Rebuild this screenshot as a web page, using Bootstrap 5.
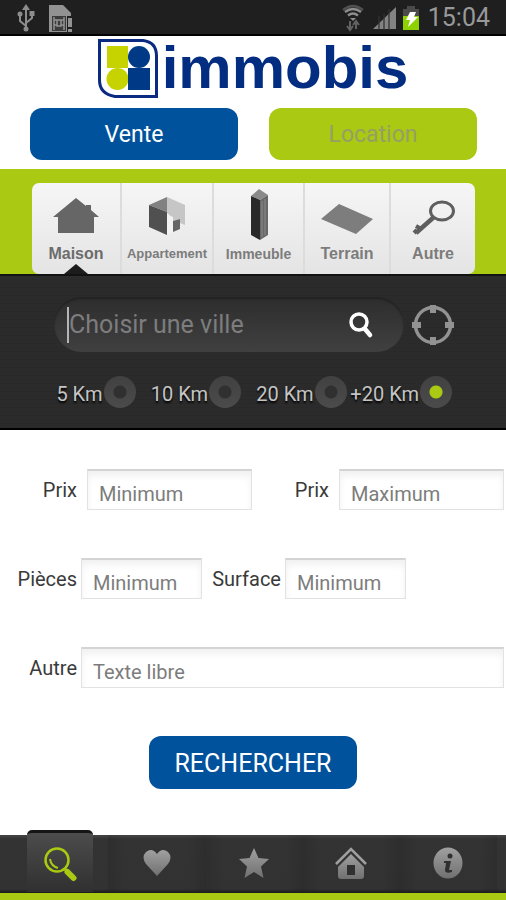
<!DOCTYPE html>
<html lang="fr">
<head>
<meta charset="utf-8">
<meta name="viewport" content="width=device-width, initial-scale=1">
<title>immobis</title>
<link href="https://cdn.jsdelivr.net/npm/bootstrap@5.3.0/dist/css/bootstrap.min.css" rel="stylesheet">
<style>
:root{--lime:#a9c913;--blue:#00529c;--ink:#2b2b2b}
body{font-family:Roboto,sans-serif;background:#fff;font-size:20px;line-height:24px}
svg{display:block;flex:none}
.statusbar{height:36px;background:#1f1f1f;border-bottom:2px solid #000;color:#999;font-size:25px;padding-top:2px}
.brand-name{font:700 60px/64px "Liberation Sans",Arial,sans-serif;color:#022d80}
.brand-row{height:64px}
.deal{padding:0 29px 9px 30px;margin-top:8px;gap:31px}
.btn-deal{height:52px;border-radius:12px;border:0;font-size:23px;line-height:24px;padding:8px 0 6px;color:#fff;background:var(--blue)}
.btn-deal:hover{color:#fff;background:#0a5eac}
.btn-deal.alt{background:var(--lime);color:#979f63}
.kinds{background:var(--lime);padding:14px 31px 0 32px}
.kind-grid{display:grid;grid-template-columns:90fr 92fr 91fr 86fr 84fr;background:linear-gradient(#f6f6f6,#e4e4e4);border-radius:7px;overflow:hidden}
.kind{display:flex;flex-direction:column;align-items:center;gap:1px;height:91px;padding:6px 0 0;border:0;background:none;border-right:2px solid #dcdcdc;color:#7c7c7c;font:700 16px/20px "Liberation Sans",Arial,sans-serif}
.kind:last-child{border-right:0}
.kind.t14{font-size:14px}.kind.t13{font-size:13px}
.kind.active{position:relative;color:#6c6c6c}
.kind.active::after{content:"";position:absolute;left:50%;bottom:0;margin-left:-12px;border:12px solid transparent;border-top:0;border-bottom:10px solid #1c1c1c}
.finder{background-color:var(--ink);background-image:repeating-linear-gradient(0deg,rgba(0,0,0,.04) 0 1px,transparent 1px 4px);border-top:2px solid #101214;border-bottom:2px solid #000;height:156px;padding:21px 52px 0 54px}
.pill{height:55px;min-width:0;border-radius:28px;background:linear-gradient(#2d2d2d,#404040);box-shadow:inset 0 2px 2px #222;padding:0 30px 0 13px}
.pill:focus-within{outline:1px solid #555}
.caret{width:2px;height:36px;background:#b5b5b5;flex:none}
.pill input{background:none;border:0;outline:0;color:#ddd;font-size:25px;line-height:32px;padding:0;width:0}
.pill input::placeholder{color:#7d7d7d;opacity:1}
.icon-btn{border:0;background:none;padding:0}
.radii{display:grid;grid-template-columns:repeat(4,1fr);margin:24px 2px 0 -24px}
.radii label{color:#c4c4c4;white-space:nowrap;text-shadow:0 2px 2px #000;gap:1px}
.radii span{padding-top:4px}
.radii input{appearance:none;width:32px;height:32px;border-radius:50%;margin:0;flex:none;background:radial-gradient(circle,#303030 0 6px,transparent 7px),linear-gradient(#414141,#4b4b4b)}
.radii input:checked{background:radial-gradient(circle,var(--lime) 0 6px,transparent 7px),linear-gradient(#414141,#4b4b4b)}
.criteria{padding:39px 2px 0 0;gap:48px}
.criteria label{width:77px;flex:none;text-align:right;color:#3a3a3a}
.criteria label.mid{width:79px}
.criteria input{height:41px;min-width:0;border:1px solid #e2e2e2;border-top:2px solid #d4d4d4;border-radius:0;box-shadow:inset 0 5px 7px #f1f1f1;padding:8px 11px 0 11px;color:#333;background:#fff}
.criteria input::placeholder{color:#7c7c7c;opacity:1}
.g10{gap:10px}.g4{gap:4px}
.short{flex:0 0 24%}
.btn-go{width:41%;height:53px;margin:48px auto 40px;font-size:25px}
.tabs{height:65px;padding:0 9px 0 11px;display:grid;grid-template-columns:repeat(5,1fr);border-bottom:7px solid var(--lime);background:linear-gradient(#454545 0,#333 4px,#323232 54px,#1b1b1b 58px)}
.tabs a{display:flex;justify-content:center;align-items:center;height:56px;background:linear-gradient(90deg,rgba(0,0,0,.1),transparent 18%,transparent 82%,rgba(0,0,0,.1))}
.tabs a.active{width:66px;height:62px;margin:-5px auto 0;padding-top:3px;background:linear-gradient(#4c4c4c,#303030);border-top:3px solid #151515;border-radius:5px 5px 0 0}
</style>
</head>
<body class="d-flex flex-column min-vh-100">
<header>
  <div class="statusbar d-flex align-items-center px-3">
    <svg width="20" height="30" viewBox="0 0 20 30" fill="none" stroke="#8d8d8d" stroke-width="2"><path d="M10 27V4M10 23L4 18v-6M10 20l6-5V9"/><path d="M10 1l4 6H6z" fill="#8d8d8d" stroke="none"/><circle cx="10" cy="26" r="2.500" fill="#8d8d8d" stroke="none"/><circle cx="4" cy="11" r="1.500" fill="#8d8d8d"/><path d="M13.500 8h5v5h-5z" fill="#8d8d8d" stroke="none"/></svg>
    <svg class="ms-2 ps-1" width="31" height="29" viewBox="0 0 27 29"><path d="M1 1h14l8 8v3h-4v16H1z" fill="#929292"/><path d="M4 12h14v15H4z" fill="#3c3c3c"/><path d="M6 13v13M16 13v13M6 16h3M6 21h3M13 16h3M13 21h3M9 16v6h4v-6z" stroke="#929292" stroke-width="1.5" fill="none"/><path d="M20 14h4v9h-4zM20 25h4v3h-4z" fill="#929292"/></svg>
    <svg class="ms-auto" width="22" height="28" viewBox="0 0 22 28" fill="none" stroke="#8d8d8d" stroke-width="2.4"><path d="M1 6q10-8 20 0" stroke="#505050"/><path d="M3 8q8-6 16 0"/><path d="M6 11.500q5-4 10 0"/><path d="M8 14l3 3 3-3z" fill="#8d8d8d"  stroke="none"/><path d="M8 17v8M5 22l3 4 3-4M14 25v-7M11 21l3-4 3 4" stroke="#626262" stroke-width="2"/></svg>
    <svg class="ms-2" width="26" height="24" viewBox="0 0 26 24"><path d="M1 23L24 1v22z" fill="#838383"/><path d="M7 10v14M12 8v16M17 3v21" stroke="#333" stroke-width="1.3"/></svg>
    <svg class="ms-1" width="18" height="26" viewBox="0 0 18 26"><path d="M5 1h8v3h4v8H1V4h4z" fill="#4a4a4a"/><path d="M1 11h16v14H1z" fill="#8ed300"/><path d="M8 7h6l-2 5h4L6 22l2-7H4z" fill="#fff"/></svg>
    <span class="ms-2">15:04</span>
  </div>
  <div class="brand-row d-flex justify-content-center align-items-start">
    <svg width="60" height="62" viewBox="0 0 60 62"><path d="M1.500 4.500H45Q58.500 6 58.500 20V60.500H17Q1.500 58 1.500 44z" fill="#fff" stroke="#0b2b83" stroke-width="3"/><path d="M9 10h21v22H9z" fill="#c6d300"/><circle cx="19.500" cy="43" r="11" fill="#c6d300"/><circle cx="41" cy="21" r="11" fill="#003a86"/><path d="M30 32h22v22H30z" fill="#003a86"/></svg>
    <span class="brand-name ms-1">immobis</span>
  </div>
  <div class="deal d-flex">
    <button type="button" class="btn btn-deal flex-fill w-50">Vente</button>
    <button type="button" class="btn btn-deal alt flex-fill w-50">Location</button>
  </div>
</header>
<main>
  <div class="kinds"><div class="kind-grid">
    <button type="button" class="kind active"><svg width="48" height="54" viewBox="0 0 48 54"><path d="M1 28L24 9l10 8v-1h5v5l8 7h-5v16H6V28z" fill="#666"/></svg>Maison</button>
    <button type="button" class="kind t13"><svg width="48" height="54" viewBox="0 0 48 54"><path d="M6 16l18-8v15z" fill="#818181"/><path d="M6 16l18 7v23L6 38z" fill="#505050"/><path d="M24 8l18 8v20l-5-2v-4l-7 2v-4l-6-2z" fill="#c6c6c6"/><path d="M24 24l6 5v14l-6 3z" fill="#f2f2f2"/><path d="M30 32l7-2v10l-7 3z" fill="#666"/></svg>Appartement</button>
    <button type="button" class="kind t14"><svg width="48" height="54" viewBox="0 0 48 54"><path d="M16 7l8-7 9 6-8 5z" fill="#8a8a8a"/><path d="M16 7l9 4v40l-9-5z" fill="#292929"/><path d="M25 11l8-5v40l-8 5z" fill="#686868"/><path d="M27 12v36M30 10v36" stroke="#8b8b8b"/></svg>Immeuble</button>
    <button type="button" class="kind"><svg width="54" height="54" viewBox="0 0 54 54"><path d="M1 30l18-15 34 15-17 15z" fill="#7d7d7d"/></svg>Terrain</button>
    <button type="button" class="kind"><svg width="48" height="54" viewBox="0 0 48 54" fill="none" stroke="#5e5e5e"><ellipse cx="33" cy="22" rx="11.500" ry="9" stroke-width="3"/><path d="M25 28L7 44" stroke-width="4.500"/><path d="M12 40l-5-3M8 44l-3-3" stroke-width="4"/></svg>Autre</button>
  </div></div>
  <section class="finder">
    <div class="d-flex align-items-center">
      <div class="pill d-flex align-items-center flex-fill">
        <span class="caret"></span>
        <input type="text" class="flex-fill" placeholder="Choisir une ville" aria-label="Choisir une ville">
        <button type="button" class="icon-btn" aria-label="Rechercher une ville"><svg width="26" height="28" viewBox="0 0 26 28" fill="none" stroke="#fff"><circle cx="11" cy="11" r="8" stroke-width="3.500"/><path d="M17 18l5 6" stroke-width="4.500" stroke-linecap="round"/></svg></button>
      </div>
      <button type="button" class="icon-btn ms-2" aria-label="Me localiser"><svg width="42" height="44" viewBox="0 0 42 44" fill="none" stroke="#929292"><circle cx="21" cy="22" r="17.500" stroke-width="3.500"/><path d="M21 2v8M21 34v8M0 22h9M33 22h9" stroke-width="6"/></svg></button>
    </div>
    <div class="radii">
      <label class="d-flex align-items-center justify-content-end"><span>5 Km</span><input type="radio" name="r"></label>
      <label class="d-flex align-items-center justify-content-end"><span>10 Km</span><input type="radio" name="r"></label>
      <label class="d-flex align-items-center justify-content-end"><span>20 Km</span><input type="radio" name="r"></label>
      <label class="d-flex align-items-center justify-content-end"><span>+20 Km</span><input type="radio" name="r" checked></label>
    </div>
  </section>
  <form class="d-flex flex-column">
    <div class="criteria d-flex flex-column">
      <div class="d-flex">
        <div class="d-flex align-items-center g10 w-50"><label for="pmin">Prix</label><input id="pmin" type="text" class="flex-fill" placeholder="Minimum"></div>
        <div class="d-flex align-items-center g10 w-50"><label for="pmax">Prix</label><input id="pmax" type="text" class="flex-fill" placeholder="Maximum"></div>
      </div>
      <div class="d-flex align-items-center">
        <label for="rooms">Pièces</label><input id="rooms" type="text" class="short ms-1" placeholder="Minimum">
        <label for="area" class="mid">Surface</label><input id="area" type="text" class="short ms-1" placeholder="Minimum">
      </div>
      <div class="d-flex align-items-center g4"><label for="other">Autre</label><input id="other" type="text" class="flex-fill" placeholder="Texte libre"></div>
    </div>
    <button type="submit" class="btn btn-deal btn-go">RECHERCHER</button>
  </form>
</main>
<nav class="tabs mt-auto">
  <a href="#" class="active" aria-label="Recherche"><svg width="34" height="36" viewBox="0 0 34 36" fill="none" stroke="#a9c913"><circle cx="14" cy="14" r="11.500" stroke-width="2.500"/><path d="M7 13q1 7 8 9" stroke-width="2"/><path d="M22 23l3 3" stroke-width="3"/><path d="M24.500 26l6 6" stroke-width="6" stroke-linecap="round"/></svg></a>
  <a href="#" aria-label="Favoris"><svg width="28" height="28" viewBox="0 0 28 28"><defs><linearGradient id="g" x2="0" y2="1"><stop stop-color="#a0a0a0"/><stop offset="1" stop-color="#707070"/></linearGradient></defs><path d="M14 27L3 15Q-2 8 3 3q6-5 11 2 5-7 11-2 5 5 0 12z" fill="url(#g)"/></svg></a>
  <a href="#" aria-label="Sélection"><svg width="32" height="32" viewBox="0 0 32 32"><path d="M16 1l4.500 10L31 12l-8 7.500L25.500 31 16 25l-9.500 6L9 19.500 1 12l10.500-1z" fill="url(#g)"/></svg></a>
  <a href="#" aria-label="Accueil"><svg width="32" height="34" viewBox="0 0 32 34"><path d="M1 18L16 3l15 15" fill="none" stroke="#a0a0a0" stroke-width="2.500"/><path d="M3 21L16 8l13 13v9q0 3-3 3H6q-3 0-3-3z" fill="url(#g)"/><path d="M12 19h8v10h-8z" fill="#303030"/></svg></a>
  <a href="#" aria-label="Informations"><svg width="30" height="32" viewBox="0 0 30 32"><ellipse cx="15" cy="16" rx="14.500" ry="15.500" fill="url(#g)"/><circle cx="17" cy="9" r="2.500" fill="#303030"/><path d="M11 14h7l-2 9h3v2q-7 2-7-2l1-7h-2z" fill="#303030"/></svg></a>
</nav>
<script src="https://cdn.jsdelivr.net/npm/bootstrap@5.3.0/dist/js/bootstrap.bundle.min.js"></script>
</body>
</html>
